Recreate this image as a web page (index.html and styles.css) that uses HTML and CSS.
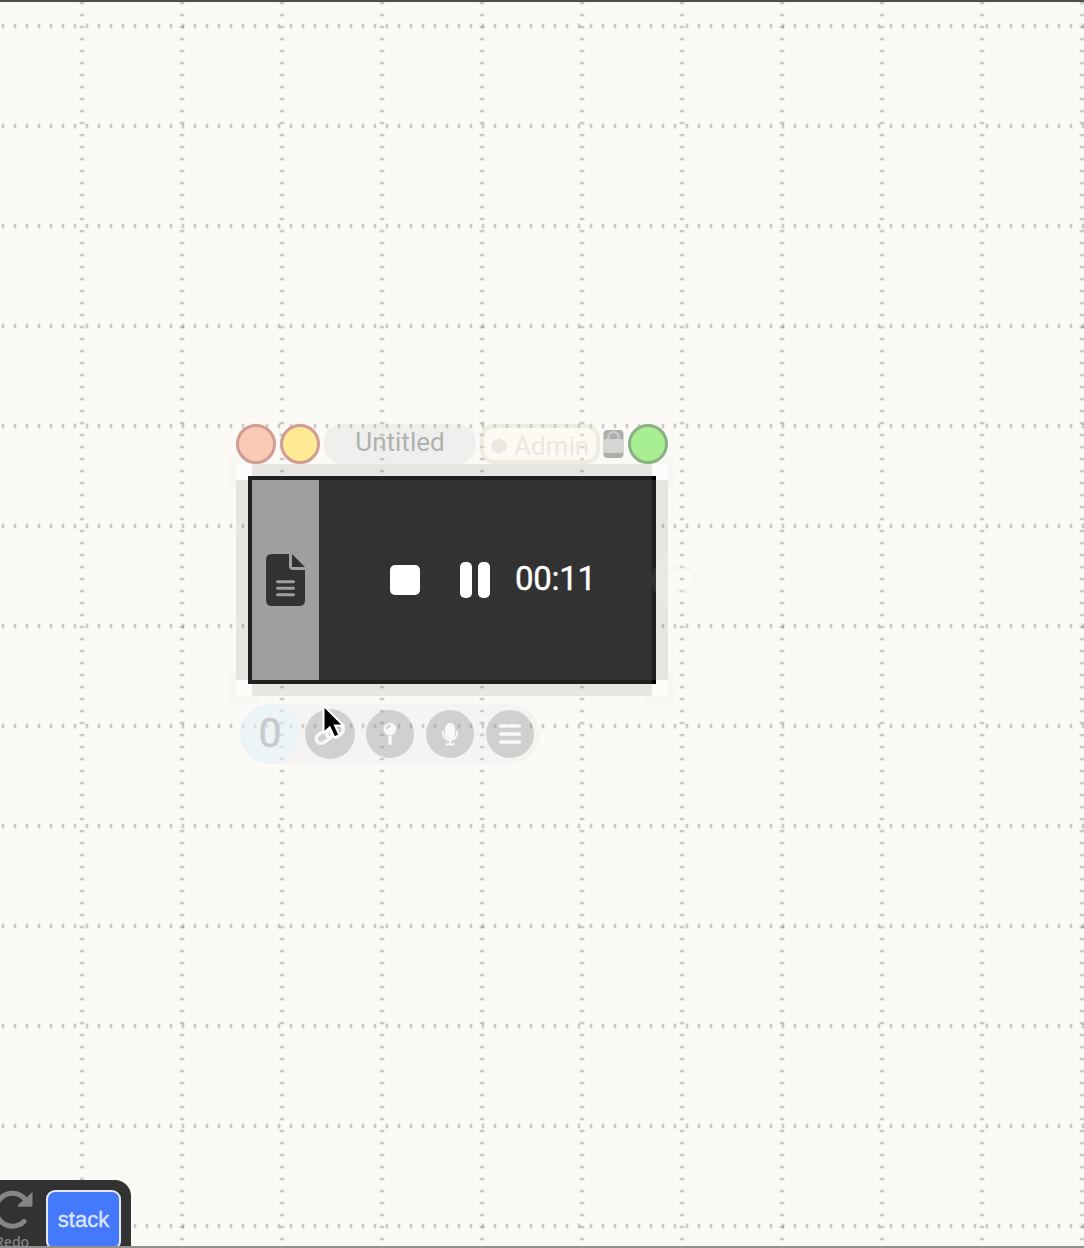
FILE: index.html
```html
<!DOCTYPE html>
<html lang="en">
<head>
<meta charset="utf-8">
<title>Canvas</title>
<link rel="stylesheet" href="styles.css">
</head>
<body>
<main class="canvas">
  <svg class="grid" width="1084" height="1248">
    <defs>
      <pattern id="rows" width="12" height="100" patternUnits="userSpaceOnUse"><rect class="dot" x="1.700" y="23.700" width="2.600" height="4.600"/></pattern>
      <pattern id="cols" width="100" height="12" patternUnits="userSpaceOnUse"><rect class="dot" x="79.700" y="1.800" width="4.600" height="2.500"/></pattern>
    </defs>
    <rect width="1084" height="1248" fill="url(#rows)"/>
    <rect width="1084" height="1248" fill="url(#cols)"/>
  </svg>

  <section class="node">
    <svg class="frame" width="448" height="248" viewBox="228 456 448 248">
      <g class="handle"><path d="M228 456h32v32h-32zM644 456h32v32h-32zM228 672h32v32h-32zM644 672h32v32h-32z"/></g>
      <g class="corner"><path d="M236 464h16v16h-16zM652 464h16v16h-16zM236 680h16v16h-16zM652 680h16v16h-16z"/></g>
      <path class="edge-base" d="M252 464h8v12h-8zM644 464h8v12h-8zM252 684h8v12h-8zM644 684h8v12h-8zM236 480h12v8h-12zM656 480h12v8h-12zM236 672h12v8h-12zM656 672h12v8h-12z"/>
      <path class="edge" d="M252 464h400v12H252zM252 684h400v12H252zM236 480h12v200h-12zM656 480h12v200h-12z"/>
    </svg>
    <header class="titlebar">
      <span class="light close"></span>
      <span class="light minimize"></span>
      <span class="title">Untitled</span>
      <span class="role"><svg width="16" height="18" viewBox="0 0 16 18"><path d="M8 1l7.500 4v8l-7.500 4-7.500-4V5z"/></svg>Admin</span>
      <svg class="lock" width="20" height="29" viewBox="0 0 20 29"><rect width="20" height="28" rx="4" fill="#adadab"/><path d="M5 11V7a5 5 0 0 1 10 0v4" fill="none" stroke="#cbcbc9" stroke-width="2.500"/><rect y="9" width="20" height="14" rx="3" fill="#d6d6d4"/></svg>
      <span class="light expand"></span>
    </header>
    <div class="recorder">
      <div class="kind">
        <svg width="39" height="52" viewBox="0 0 39 52"><path fill="#323232" d="M6 0h17v12q0 4 4 4h12v30q0 6-6 6H6q-6 0-6-6V6q0-6 6-6zM26 0l13 13H26z"/><path d="M11.500 27.700h16M11.500 34.200h16M11.500 40.700h16" stroke="#9f9f9f" stroke-width="3" stroke-linecap="round"/></svg>
      </div>
      <div class="controls">
        <span class="stop"></span>
        <span class="pause"><i></i><i></i></span>
        <time class="time">00:11</time>
      </div>
    </div>
    <svg class="port" width="60" height="60" viewBox="0 0 60 60"><circle cx="30" cy="30" r="30" fill="#fff" fill-opacity=".08"/><path d="M24 20a11.500 11.500 0 1 1 0 19M17 19h9" fill="none" stroke="#eeeee9" stroke-opacity=".3" stroke-width="4"/></svg>
    <nav class="tools">
      <span class="count">0</span>
      <span class="tool link"><svg width="50" height="50" viewBox="0 0 50 50"><g fill="none" stroke="#f8f8f6" stroke-width="3.200" stroke-linecap="round"><path d="M16.500 23.500l-3 2.200c-5 4-0.500 11 5 8l6-4c3-2.200 3-5.500 1.500-7.500"/><path d="M31 28.500l4.500-3c6-4.500 1-12-5-9l-6 4c-3.500 2.500-3.500 6.500-.5 8.500"/></g></svg></span>
      <span class="tool"><svg width="48" height="48" viewBox="0 0 48 48"><circle cx="24" cy="19" r="6.300" fill="#f8f8f6"/><path d="M24 27v6.500" stroke="#f8f8f6" stroke-width="3.500" stroke-linecap="round"/><path d="M20 19.500q0-5 5-5-1 4-5 5z" fill="#cfcfcd"/></svg></span>
      <span class="tool"><svg width="48" height="48" viewBox="0 0 48 48"><rect x="19" y="13" width="10" height="16" rx="5" fill="#f8f8f6"/><path d="M17 21v2a7 7 0 0 0 14 0v-2M24 30v4M19.500 34.300h9" fill="none" stroke="#f8f8f6" stroke-width="2"/></svg></span>
      <span class="tool"><svg width="48" height="48" viewBox="0 0 48 48"><path d="M14.500 16h19M14.500 24h19M14.500 32h19" stroke="#f8f8f6" stroke-width="3.400" stroke-linecap="round"/></svg></span>
    </nav>
  </section>

  <svg class="cursor" width="30" height="40" viewBox="0 0 30 40"><path d="M2.500 1.500v27.500l6.200-5.600 4.600 10.100 5.200-2.300-4.500-9.700h8.500z" fill="#000" stroke="#fff" stroke-width="2"/></svg>

  <div class="dock">
    <div class="redo"><svg width="36" height="40" viewBox="0 0 36 40"><path d="M25 9a16.500 16.500 0 1 0 -1 22.500" fill="none" stroke="#858585" stroke-width="5" stroke-linecap="round"/><path d="M32.500 2v13q0 1.700-1.700 1.700H19q-1.800 0-1-1.700z" fill="#858585"/></svg><span>Redo</span></div>
    <button class="stack">stack</button>
  </div>
</main>
</body>
</html>
```
FILE: styles.css
```css
* { box-sizing: border-box; }
body { margin: 0; font-family: Roboto, sans-serif; }
.canvas { position: relative; width: 1084px; height: 1248px; overflow: hidden; background: #fbfaf6; border-top: 2px solid #514d4a; border-bottom: 2px solid #92918e; }
.grid { position: absolute; left: 0; top: -2px; }
.dot { fill: #5a5a58; fill-opacity: .3; }
.node { position: absolute; left: 228px; top: 422px; width: 480px; padding: 0 0 0 8px; }
.frame { position: absolute; left: 0; top: 32px; }
.handle { fill: #f7f7f4; }
.corner { fill: #fdfcfa; }
.edge-base { fill: #fbfaf6; }
.edge { fill: #5a5a58; fill-opacity: .12; }
.titlebar { position: relative; display: flex; align-items: center; width: 432px; height: 40px; }
.light { width: 40px; height: 40px; flex: none; border-radius: 50%; border: 3px solid #d19b96; }
.close { background: #fbc9b4; margin-right: 4px; }
.minimize { background: #ffea93; margin-right: 4px; }
.expand { background: #a8ef92; border-color: #8bb083; margin-left: 4px; }
.title { width: 152px; height: 40px; border-radius: 18px; background: rgba(170,170,180,.13); color: #b1b1af; text-align: center; font-size: 26px; line-height: 37px; }
.role { display: flex; align-items: center; gap: 7px; width: 120px; height: 40px; margin: 0 3px 0 4px; padding: 4px 0 0 7px; border: 4px solid rgba(150,155,130,.14); border-radius: 14px; background: rgba(255,250,232,.25); color: #e9e9e2; font-size: 26px; }
.role svg { fill: #e9e9e2; flex: none; }
.lock { flex: none; width: 21px; }
.recorder { position: relative; display: flex; width: 408px; height: 208px; margin: 12px 0 0 12px; border: 4px solid #202020; background: #323232; }
.recorder::before, .recorder::after { content: ""; position: absolute; right: -4px; width: 4px; height: 4px; background: #000; }
.recorder::before { top: -4px; }
.recorder::after { bottom: -4px; }
.kind { display: flex; align-items: center; width: 67px; padding-left: 14px; background: #9f9f9f; }
.controls { display: flex; align-items: center; padding-left: 71px; }
.stop { width: 30px; height: 30px; border-radius: 5px; background: #fff; }
.pause { display: flex; gap: 6px; margin-left: 40px; }
.pause i { width: 12px; height: 36px; border-radius: 5px; background: #fff; }
.time { margin: -2px 0 0 25px; color: #fff; font-size: 33px; line-height: 38px; letter-spacing: -.3px; -webkit-text-stroke: .4px #fff; }
.port { position: absolute; left: 424px; top: 126px; }
.tools { position: relative; display: flex; align-items: center; width: 300px; height: 60px; margin: 20px 0 0 4px; border-radius: 30px; background: rgba(215,215,228,.15); }
.count { width: 60px; height: 60px; border-radius: 30px; background: rgba(230,243,252,.5); color: #c7c9ca; font-size: 41px; line-height: 59px; text-align: center; -webkit-text-stroke: .5px #c7c9ca; }
.tool { width: 48px; height: 48px; margin-left: 12px; border-radius: 50%; background: rgba(120,120,118,.29); }
.tool svg { display: block; }
.link { width: 50px; height: 50px; margin: 0 -1px 0 5px; }
.cursor { position: absolute; left: 321px; top: 702px; }
.dock { position: absolute; left: -60px; top: 1178px; display: flex; width: 191px; height: 80px; padding: 10px; border-radius: 16px; background: #323232; }
.redo { width: 96px; padding-left: 50px; color: #858585; font: 500 14px/17px "Noto Sans", sans-serif; }
.redo svg { display: block; }
.redo span { display: block; margin: 3px 0 0 -5px; }
.stack { width: 75px; height: 60px; padding: 0; border: 2px solid #e4e8f2; border-radius: 9px; background: #4479fb; color: #dce5fb; font: 22px "Liberation Sans", sans-serif; -webkit-text-stroke: .4px #dce5fb; }
```
